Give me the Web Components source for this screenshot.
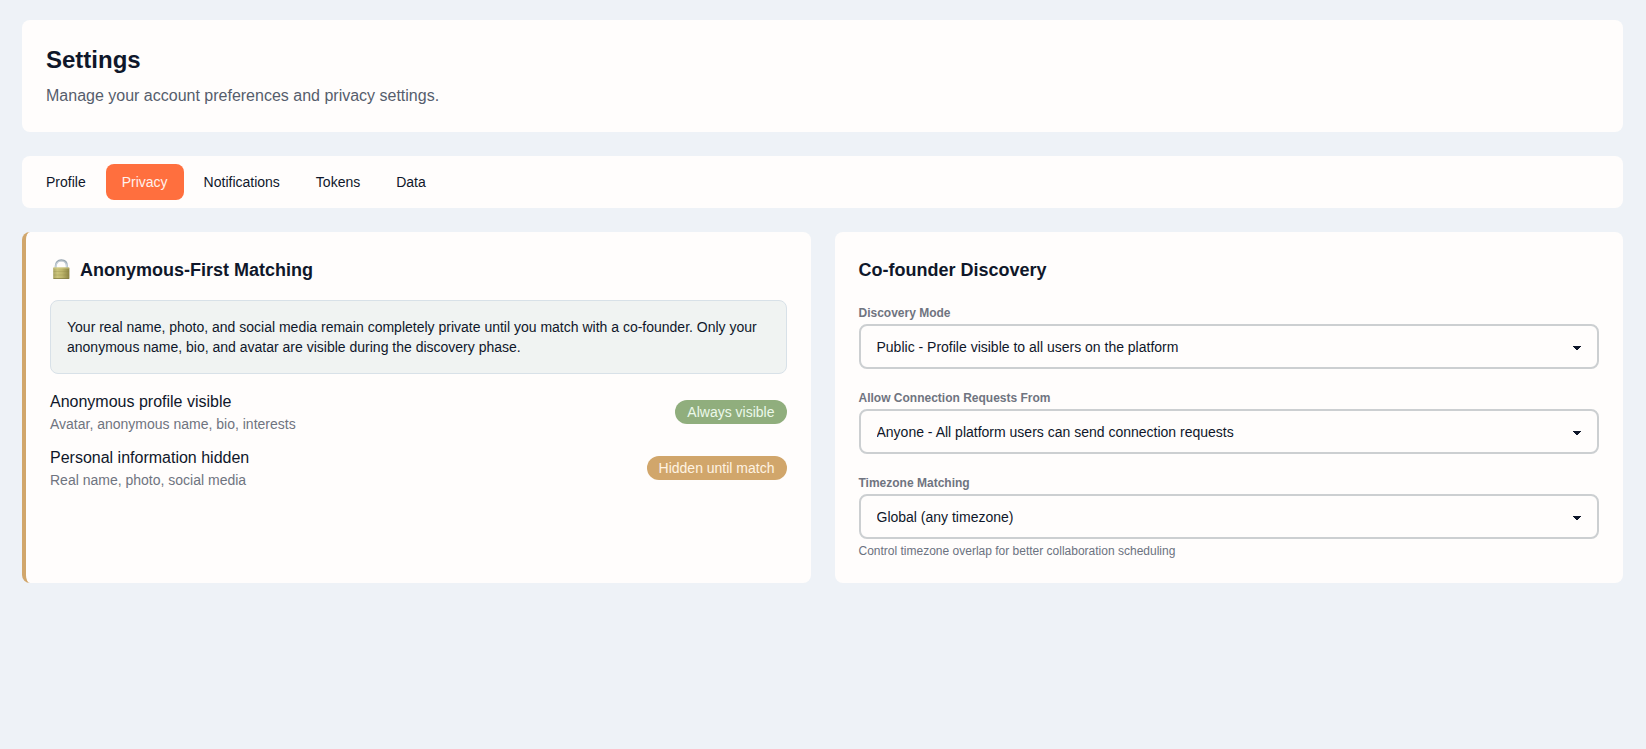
<!DOCTYPE html>
<html lang="en">
<head>
<meta charset="utf-8">
<title>Settings</title>
<style>
  body {
    margin: 0;
    background: #eef2f7;
    color: #0f172a;
    font: 14px/20px "Liberation Sans", Arial, sans-serif;
    --surface: #fffdfc;
    --muted: #6f7480;
    --gold: #d1a66b;
  }
</style>
</head>
<body>
<settings-page></settings-page>

<script>
function define(name, html, setup) {
  const template = document.createElement('template');
  template.innerHTML = html;
  customElements.define(name, class extends HTMLElement {
    constructor() {
      super();
      this.attachShadow({ mode: 'open' }).append(template.content.cloneNode(true));
    }
    connectedCallback() {
      if (setup) setup(this, this.shadowRoot);
    }
  });
}

define('page-header', `
  <style>
    :host { display: block; padding: 24px; border-radius: 8px; background: var(--surface); }
    h1 { margin: 0 0 8px; font-size: 24px; line-height: 32px; }
    p { margin: 0; font-size: 16px; line-height: 24px; color: #565d6c; }
  </style>
  <h1><slot name="title"></slot></h1>
  <p><slot></slot></p>
`);

define('tab-bar', `
  <style>
    :host { display: block; padding: 8px; border-radius: 8px; background: var(--surface); }
    div { display: flex; flex-wrap: wrap; gap: 4px; }
  </style>
  <div role="tablist"><slot></slot></div>
`);

define('tab-item', `
  <style>
    :host { display: block; }
    button {
      padding: 8px 16px; border: 0; border-radius: 8px;
      background: none; color: inherit; font: inherit; cursor: pointer;
    }
    :host([selected]) button { background: #ff6f3e; color: #fff1ec; }
  </style>
  <button type="button" role="tab"><slot></slot></button>
`, (host, root) => {
  root.querySelector('button').setAttribute('aria-selected', host.hasAttribute('selected'));
});

define('settings-card', `
  <style>
    :host { display: block; box-sizing: border-box; padding: 24px; border-radius: 8px; background: var(--surface); }
    :host([accent]) { border-left: 4px solid var(--gold); }
    h2 { display: flex; align-items: center; gap: 8px; margin: 0 0 16px; font-size: 18px; line-height: 28px; }
  </style>
  <h2><slot name="icon"></slot><slot name="title"></slot></h2>
  <slot></slot>
`);

define('lock-icon', `
  <style>
    :host { display: block; width: 22px; height: 24px; }
    svg { display: block; }
  </style>
  <svg width="22" height="24" viewBox="0 0 22 24" aria-hidden="true">
    <defs>
      <linearGradient id="brass" x1="0" x2="1" y1="0" y2="0">
        <stop offset="0" stop-color="#aaa463"/>
        <stop offset=".25" stop-color="#cbc47c"/>
        <stop offset=".55" stop-color="#bdb56b"/>
        <stop offset="1" stop-color="#8b8343"/>
      </linearGradient>
      <linearGradient id="steel" x1="0" x2="0" y1="0" y2="1">
        <stop offset="0" stop-color="#95a3ae"/>
        <stop offset="1" stop-color="#c3d0d9"/>
      </linearGradient>
    </defs>
    <path d="M5.700 10.500V8.200C5.700 4.500 8 2.400 11.300 2.400S16.900 4.500 16.900 8.200V10.500" fill="none" stroke="url(#steel)" stroke-width="2.200"/>
    <path d="M6 10V8.200C6 5 8.300 2.900 11.300 2.900S16.600 5 16.600 8.200V10" fill="none" stroke="#e2eaf0" stroke-width=".6"/>
    <rect x="3.200" y="9.500" width="16.200" height="11.300" rx=".6" fill="url(#brass)"/>
    <path d="M3.500 10h15.600" stroke="#d9d38e" stroke-width=".8"/>
    <path d="M3.500 13.500h15.600M3.500 17h15.600" stroke="#8b833f" stroke-opacity=".3" stroke-width=".8"/>
    <path d="M3.500 20.500h15.600" stroke="#77702f" stroke-width=".7"/>
  </svg>
`);

define('info-note', `
  <style>
    :host {
      display: block; margin-bottom: 16px; padding: 16px;
      border: 1px solid #d8e1e8; border-radius: 8px; background: #f0f3f2;
    }
  </style>
  <slot></slot>
`);

define('status-row', `
  <style>
    :host { display: flex; align-items: center; justify-content: space-between; gap: 16px; margin-bottom: 12px; }
    .name { font-size: 16px; line-height: 24px; }
    .detail { color: var(--muted); }
    .badge { padding: 2px 12px; border-radius: 12px; background: #90ae7d; color: #ecf9ea; white-space: nowrap; }
    :host([tone="gold"]) .badge { background: var(--gold); color: #fff3e2; }
  </style>
  <div>
    <div class="name"><slot name="name"></slot></div>
    <div class="detail"><slot></slot></div>
  </div>
  <span class="badge"><slot name="badge"></slot></span>
`);

define('select-field', `
  <style>
    :host { display: block; padding-top: 5px; }
    :host(:not(:last-child)) { margin-bottom: 16px; }
    label { display: block; margin-bottom: 3px; font-size: 12px; line-height: 16px; font-weight: bold; color: var(--muted); }
    select {
      display: block; box-sizing: border-box; width: 100%; height: 45px; padding: 0 40px 0 16px;
      appearance: none; border: 2px solid #cccfd1; border-radius: 8px;
      color: inherit; font: inherit; background-color: var(--surface);
      background-image:
        linear-gradient(45deg, transparent 45%, currentColor 45%),
        linear-gradient(135deg, currentColor 55%, transparent 55%);
      background-position: calc(100% - 20px) calc(50% + 1px), calc(100% - 16px) calc(50% + 1px);
      background-size: 4px 4px; background-repeat: no-repeat;
    }
    p { margin: 4px 0 0; font-size: 12px; line-height: 16px; color: #6b7280; }
    p:empty { display: none; }
  </style>
  <label for="choice"></label>
  <select id="choice"><option></option></select>
  <p></p>
`, (host, root) => {
  root.querySelector('label').textContent = host.getAttribute('label');
  root.querySelector('option').textContent = host.getAttribute('value');
  root.querySelector('p').textContent = host.getAttribute('hint') || '';
});

define('settings-page', `
  <style>
    :host { display: flex; flex-direction: column; gap: 24px; padding: 20px 23px 20px 22px; }
    .cards { display: grid; grid-template-columns: repeat(auto-fit, minmax(min(480px, 100%), 1fr)); gap: 24px; }
  </style>
  <page-header>
    <span slot="title">Settings</span>Manage your account preferences and privacy settings.
  </page-header>
  <tab-bar>
    <tab-item>Profile</tab-item>
    <tab-item selected>Privacy</tab-item>
    <tab-item>Notifications</tab-item>
    <tab-item>Tokens</tab-item>
    <tab-item>Data</tab-item>
  </tab-bar>
  <div class="cards">
    <settings-card accent>
      <lock-icon slot="icon"></lock-icon>
      <span slot="title">Anonymous-First Matching</span>
      <info-note>Your real name, photo, and social media remain completely private until you match with a co-founder. Only your anonymous name, bio, and avatar are visible during the discovery phase.</info-note>
      <status-row>
        <span slot="name">Anonymous profile visible</span>
        Avatar, anonymous name, bio, interests
        <span slot="badge">Always visible</span>
      </status-row>
      <status-row tone="gold">
        <span slot="name">Personal information hidden</span>
        Real name, photo, social media
        <span slot="badge">Hidden until match</span>
      </status-row>
    </settings-card>
    <settings-card>
      <span slot="title">Co-founder Discovery</span>
      <select-field label="Discovery Mode" value="Public - Profile visible to all users on the platform"></select-field>
      <select-field label="Allow Connection Requests From" value="Anyone - All platform users can send connection requests"></select-field>
      <select-field label="Timezone Matching" value="Global (any timezone)" hint="Control timezone overlap for better collaboration scheduling"></select-field>
    </settings-card>
  </div>
`);
</script>
</body>
</html>
